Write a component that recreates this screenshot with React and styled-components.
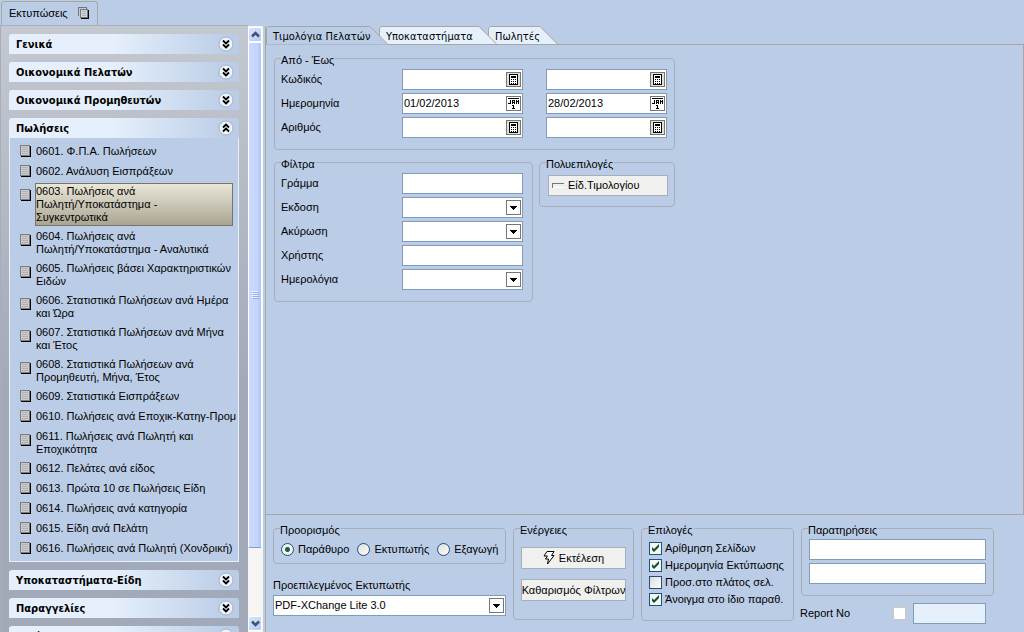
import React, { useState } from 'react';
import styled, { createGlobalStyle, ThemeProvider } from 'styled-components';

const theme = {
  blue: '#bbcde6',
  pale: '#e6f0fc',
  line: '#a7adb9',
  tabLine: '#a5a69e',
  field: '#7f9db9',
  face: '#f0f0ee',
};

const GlobalStyle = createGlobalStyle`
  * {
    box-sizing: border-box;
  }
  body {
    margin: 0;
    background: #bbcde6;
  }
  body, button, input, select {
    font: 11px/13px "Liberation Sans", Arial, sans-serif;
    color: #000;
  }
  button {
    cursor: pointer;
  }
`;

const Screen = styled.div`
  height: 100vh;
  display: flex;
  flex-direction: column;
  overflow: hidden;
  background: ${({ theme }) => theme.blue};
`;

const WindowTabs = styled.nav`
  flex: none;
  display: flex;
  height: 26px;
  padding: 1px 0 0 1px;
`;

const WindowTab = styled.button`
  display: flex;
  align-items: center;
  gap: 10px;
  padding: 0 7px;
  background: none;
  border: 1px solid ${({ theme }) => theme.tabLine};
  border-radius: 3px 3px 0 0;
`;

const Body = styled.div`
  flex: 1;
  min-height: 0;
  display: flex;
`;

const Sidebar = styled.aside`
  flex: none;
  width: 248px;
  padding: 8px 9px 0 8px;
  display: flex;
  flex-direction: column;
  gap: 8px;
  overflow: hidden;
  background: linear-gradient(#c4c8d0, #a2a9b8 60%, #a2aaba);
  border-top: 1px solid ${({ theme }) => theme.line};
  border-left: 1px solid ${({ theme }) => theme.line};
  margin-top: -1px;
`;

const Group = styled.section`
  flex: none;
`;

const GroupHeader = styled.button`
  display: flex;
  align-items: center;
  justify-content: space-between;
  width: 100%;
  height: 20px;
  padding: 0 5px 0 7px;
  border: 0;
  border-radius: 3px 3px 0 0;
  background: linear-gradient(
    90deg,
    ${({ theme }) => theme.pale} 45%,
    ${({ theme }) => theme.blue} 95%
  );
  font-family: 'DejaVu Sans Condensed', 'DejaVu Sans', sans-serif;
  font-weight: bold;
`;

const GroupList = styled.ul`
  list-style: none;
  margin: 0;
  padding: 4px 5px 2px 10px;
  background: ${({ theme }) => theme.blue};
  border: solid ${({ theme }) => theme.pale};
  border-width: 0 1px 1px;
`;

const Report = styled.button`
  display: grid;
  grid-template-columns: 12px 1fr;
  align-items: start;
  gap: 3px;
  width: 100%;
  padding: 3px 0;
  border: 0;
  background: none;
  text-align: left;

  svg {
    margin-top: ${({ $tall }) => ($tall ? 4 : 0)}px;
  }
`;

const ReportName = styled.span`
  display: block;
  min-height: 14px;
  padding: 0 0 0 1px;
  white-space: pre;
  ${({ $active }) =>
    $active &&
    `
    margin: -2px 0;
    padding: 1px 0;
    border: 1px solid #77756a;
    background: linear-gradient(#eae6d8, #aaa592);
  `}
`;

const Scrollbar = styled.div`
  flex: none;
  width: 17px;
  padding: 1px 1px 1px 0;
  display: flex;
  flex-direction: column;
  background: #f6f5f1;
  border-right: 2px solid ${({ theme }) => theme.blue};
`;

const ScrollButton = styled.button`
  flex: none;
  display: grid;
  place-items: center;
  height: 15px;
  padding: 0;
  background: linear-gradient(135deg, #dbe6fd, #b4c8f6);
  border: 1px solid #fff;
  border-radius: 2px;
`;

const Thumb = styled.div`
  flex: 505;
  display: grid;
  place-items: center;
  background: linear-gradient(90deg, #cbdafe, #c2d4fd 70%, #aec4f4);
  border: 1px solid #fff;
  border-bottom-color: #7f9fd0;
  border-radius: 2px;
`;

const Track = styled.div`
  flex: 68;
`;

const Main = styled.main`
  flex: 1;
  min-width: 0;
  display: flex;
  flex-direction: column;
  border-left: 1px solid ${({ theme }) => theme.tabLine};
`;

const TabRow = styled.div`
  flex: none;
  display: flex;
  height: 18px;
`;

const PageTab = styled.button`
  position: relative;
  flex: none;
  width: ${({ $width }) => $width}px;
  height: 19px;
  margin-right: -9px;
  padding: 2px 0 0 7px;
  border: 0;
  background: none;
  text-align: left;
  white-space: nowrap;
  font-family: 'DejaVu Sans Condensed', 'DejaVu Sans', sans-serif;
  z-index: ${({ $order }) => $order};
`;

const TabShape = styled.svg`
  position: absolute;
  inset: 0;
  width: 100%;
  height: 19px;
  z-index: -1;
  overflow: visible;
`;

const Page = styled.div`
  flex: 1;
  display: grid;
  grid-template-columns: 259px 136px;
  grid-template-rows: auto auto;
  align-content: start;
  align-items: start;
  gap: 12px 6px;
  padding: 13px 8px 0;
  border: solid ${({ theme }) => theme.tabLine};
  border-width: 1px 1px 1px 0;
`;

const Box = styled.fieldset`
  position: relative;
  min-width: 0;
  margin: 0;
  padding: ${({ $pad }) => $pad || '10px 7px'};
  border: 1px solid ${({ theme }) => theme.line};
  border-radius: 4px;
  grid-column: ${({ $wide }) => ($wide ? 'span 2' : 'auto')};
`;

const Legend = styled.legend`
  position: absolute;
  top: -5px;
  left: 6px;
  padding: 0 1px 0 0;
  background: ${({ theme }) => theme.blue};
`;

const Rows = styled.div`
  display: grid;
  grid-template-columns: ${({ $cols }) => $cols};
  align-items: center;
  row-gap: 3px;
`;

const Field = styled.div`
  display: flex;
  align-items: center;
  height: 21px;
  padding: 0 1px;
  background: ${({ $muted, theme }) => ($muted ? theme.pale : '#fff')};
  border: 1px solid ${({ theme }) => theme.field};
`;

const TextInput = styled.input`
  flex: 1;
  min-width: 0;
  width: 100%;
  padding: 0;
  border: 0;
  outline: 0;
  background: none;
`;

const FieldButton = styled.button`
  flex: none;
  display: grid;
  place-items: center;
  width: 15px;
  height: 15px;
  padding: 0;
  background: #e4e0d4;
  border: 1px solid #77756f;
`;

const SelectField = styled.select`
  width: 100%;
  height: 21px;
  padding: 0 18px 0 1px;
  appearance: none;
  border: 1px solid ${({ theme }) => theme.field};
  border-radius: 0;
  background: #fff
    url("data:image/svg+xml,%3Csvg xmlns='http://www.w3.org/2000/svg' width='15' height='15' shape-rendering='crispEdges'%3E%3Cpath fill='%23fff' stroke='%2377756f' d='M.5.5h14v14H.5z'/%3E%3Cpath d='M4 6h7v1h-1v1H9v1H8v1H7V9H6V8H5V7H4z'/%3E%3C/svg%3E")
    no-repeat right 1px center;
`;

const PushButton = styled.button`
  display: flex;
  align-items: center;
  justify-content: ${({ $start }) => ($start ? 'flex-start' : 'center')};
  gap: 4px;
  width: 100%;
  height: ${({ $start }) => ($start ? 21 : 22)}px;
  padding: 0 3px;
  background: ${({ theme }) => theme.face};
  border: 1px solid ${({ theme }) => theme.line};
  white-space: nowrap;
`;

const Footer = styled.footer`
  flex: none;
  display: flex;
  align-items: flex-start;
  gap: 7px;
  height: 117px;
  padding: 13px 7px 0;
`;

const Column = styled.div`
  flex: none;
  width: ${({ $width }) => $width}px;
`;

const Options = styled.div`
  display: flex;
  flex-direction: ${({ $vertical }) => ($vertical ? 'column' : 'row')};
  gap: ${({ $gap }) => $gap}px;
`;

const Choice = styled.label`
  display: flex;
  align-items: center;
  gap: ${({ $gap }) => $gap || 3}px;
  white-space: nowrap;
`;

const Radio = styled.input`
  appearance: none;
  width: 13px;
  height: 13px;
  margin: 0;
  border: 1px solid #1c5180;
  border-radius: 50%;
  background: linear-gradient(135deg, #dcdcd7, #fff);
  &:checked {
    background: radial-gradient(circle, #1b5c50 2px, #f4f4f1 3px);
  }
`;

const Check = styled.input`
  appearance: none;
  flex: none;
  width: 13px;
  height: 13px;
  margin: 0;
  border: 1px solid ${({ $plain }) => ($plain ? '#cdc9b5' : '#1c5180')};
  background: ${({ $plain }) =>
    $plain ? '#fff' : 'linear-gradient(135deg, #dcdcd7, #fff)'};
  &:checked {
    background: #f4f8f2
      url("data:image/svg+xml,%3Csvg xmlns='http://www.w3.org/2000/svg' width='11' height='11'%3E%3Cpath fill='%23144f3c' d='M2 4l2 2 5-5v3L4 9 2 7z'/%3E%3C/svg%3E");
  }
`;

const PrinterLabel = styled.label`
  display: block;
  margin: 15px 0 3px;
`;

const ReportNo = styled.div`
  display: grid;
  grid-template-columns: 1fr 13px 73px;
  align-items: center;
  gap: 7px;
  margin: 7px 8px 0 -1px;
`;

const SheetIcon = () => (
  <svg width="12" height="13" shapeRendering="crispEdges">
    <path d="M1 11h9V1h1v11H1z" fill="#000" />
    <path d="M.5.5h9v10h-9z" fill="#c8cbcf" stroke="#7c7c7c" />
    <path d="M2 2.500h6M2 4.500h6M2 6.500h6M2 8.500h6" stroke="#b0b2b5" />
  </svg>
);

const SheetsIcon = () => (
  <svg width="12" height="13" shapeRendering="crispEdges">
    <path d="M.5 8.500v-8h8v2" fill="none" stroke="#777" />
    <path d="M3 11h7V3h1v9H3z" fill="#000" />
    <path d="M2.500 2.500h7v8h-7z" fill="#cdd5e0" stroke="#777" />
    <path d="M4 4.500h4M4 6.500h4M4 8.500h4" stroke="#b0b2b5" />
  </svg>
);

const Chevrons = ({ up }) => (
  <svg width="16" height="16" viewBox="0 0 16 16">
    <circle cx="8" cy="8" r="7" fill="#edf4fd" stroke="#a3b1c8" />
    <path
      d="M5 4.500l3 3 3-3M5 8.500l3 3 3-3"
      transform={up ? 'rotate(180 8 8)' : undefined}
      fill="none"
      stroke="#000"
      strokeWidth="1.800"
    />
  </svg>
);

const Arrow = ({ up }) => (
  <svg width="9" height="7">
    <path
      d={up ? 'M1 5.500l3.500-3.500L8 5.500' : 'M1 1.500L4.500 5 8 1.500'}
      fill="none"
      stroke="#365676"
      strokeWidth="2.500"
    />
  </svg>
);

const CalcIcon = () => (
  <svg width="9" height="11" shapeRendering="crispEdges">
    <path d="M.5.5h8v10h-8z" fill="#fff" stroke="#000" />
    <path d="M2 2h5v2H2z" />
    <path d="M2 5.500h5M2 7.500h5M2 9h5" stroke="#000" strokeDasharray="1 1" />
  </svg>
);

const CalendarIcon = () => (
  <svg width="13" height="13" shapeRendering="crispEdges">
    <path d="M0 0h13v13H0z" fill="#fff" />
    <path d="M1 1h11v1H1z" />
    <path
      d="M3.500 3v4M1 6.500h2M5.500 7V3.500h2V7M5 5.500h3M9.500 7V3M11.500 7V3M10 4.500h1M6.500 8v4M5 8.500h1M5 11.500h3"
      fill="none"
      stroke="#000"
    />
  </svg>
);

const BoltIcon = () => (
  <svg width="12" height="14">
    <path
      d="M4 .5h7L8.500 4.500h2.500L4.500 13l1-5H2.500l2-3H1z"
      fill="#fff"
      stroke="#000"
    />
  </svg>
);

const SlotIcon = () => (
  <svg width="12" height="5" shapeRendering="crispEdges">
    <path d="M.5 5V.5H12" fill="none" stroke="#777" />
    <path d="M1 4.500h11V1" fill="none" stroke="#fff" />
  </svg>
);

const Grip = () => (
  <svg width="7" height="8" shapeRendering="crispEdges">
    <path d="M0 .5h6M0 2.500h6M0 4.500h6M0 6.500h6" stroke="#eef4fe" />
    <path d="M1 1.500h6M1 3.500h6M1 5.500h6M1 7.500h6" stroke="#8cb0f8" />
  </svg>
);

const reports = [
  '0601. Φ.Π.Α. Πωλήσεων',
  '0602. Ανάλυση Εισπράξεων',
  '0603. Πωλήσεις ανά\nΠωλητή/Υποκατάστημα -\nΣυγκεντρωτικά',
  '0604. Πωλήσεις ανά\nΠωλητή/Υποκατάστημα - Αναλυτικά',
  '0605. Πωλήσεις βάσει Χαρακτηριστικών\nΕιδών',
  '0606. Στατιστικά Πωλήσεων ανά Ημέρα\nκαι Ώρα',
  '0607. Στατιστικά Πωλήσεων ανά Μήνα\nκαι Έτος',
  '0608. Στατιστικά Πωλήσεων ανά\nΠρομηθευτή, Μήνα, Έτος',
  '0609. Στατιστικά Εισπράξεων',
  '0610. Πωλήσεις ανά Εποχικ-Κατηγ-Προμ',
  '0611. Πωλήσεις ανά Πωλητή και\nΕποχικότητα',
  '0612. Πελάτες ανά είδος',
  '0613. Πρώτα 10 σε Πωλήσεις Είδη',
  '0614. Πωλήσεις ανά κατηγορία',
  '0615. Είδη ανά Πελάτη',
  '0616. Πωλήσεις ανά Πωλητή (Χονδρική)',
];

const groups = [
  { title: 'Γενικά' },
  { title: 'Οικονομικά Πελατών' },
  { title: 'Οικονομικά Προμηθευτών' },
  { title: 'Πωλήσεις', items: reports },
  { title: 'Υποκαταστήματα-Είδη' },
  { title: 'Παραγγελίες' },
  { title: 'Κινήσεις' },
];

const ranges = [
  { id: 'code', label: 'Κωδικός', Icon: CalcIcon, values: ['', ''] },
  {
    id: 'date',
    label: 'Ημερομηνία',
    Icon: CalendarIcon,
    values: ['01/02/2013', '28/02/2013'],
  },
  { id: 'number', label: 'Αριθμός', Icon: CalcIcon, values: ['', ''] },
];

const filters = [
  { id: 'letter', label: 'Γράμμα' },
  { id: 'issue', label: 'Εκδοση', select: true },
  { id: 'cancel', label: 'Ακύρωση', select: true },
  { id: 'user', label: 'Χρήστης' },
  { id: 'journal', label: 'Ημερολόγια', select: true },
];

const tabs = [
  { label: 'Τιμολόγια Πελατών', width: 122 },
  { label: 'Υποκαταστήματα', width: 118 },
  { label: 'Πωλητές', width: 70 },
];

const options = [
  { label: 'Αρίθμηση Σελίδων', checked: true },
  { label: 'Ημερομηνία Εκτύπωσης', checked: true },
  { label: 'Προσ.στο πλάτος σελ.', checked: false },
  { label: 'Άνοιγμα στο ίδιο παραθ.', checked: true },
];

const NavGroup = ({ title, items, selected, onSelect }) => (
  <Group>
    <GroupHeader>
      {title}
      <Chevrons up={Boolean(items)} />
    </GroupHeader>
    {items && (
      <GroupList>
        {items.map((item) => (
          <li key={item}>
            <Report $tall={item.includes('\n')} onClick={() => onSelect(item)}>
              <SheetIcon />
              <ReportName $active={item === selected}>{item}</ReportName>
            </Report>
          </li>
        ))}
      </GroupList>
    )}
  </Group>
);

const PageTabs = ({ active, onChange }) => (
  <TabRow role="tablist">
    {tabs.map(({ label, width }, i) => (
      <PageTab
        key={label}
        role="tab"
        aria-selected={active === i}
        $width={width}
        $order={active === i ? 4 : 3 - i}
        onClick={() => onChange(i)}
      >
        <TabShape>
          <path
            d={`M.5 18.500V2.500l2-2H${width - 18}l18 18`}
            fill={active === i ? theme.blue : theme.pale}
          />
          <path
            d={`M.5 18.500V2.500l2-2H${width - 18}l18 18${active === i ? '' : 'H0'}`}
            fill="none"
            stroke={theme.tabLine}
          />
        </TabShape>
        {label}
      </PageTab>
    ))}
  </TabRow>
);

const App = () => {
  const [selected, setSelected] = useState(reports[2]);
  const [tab, setTab] = useState(0);

  return (
    <ThemeProvider theme={theme}>
      <GlobalStyle />
      <Screen>
        <WindowTabs>
          <WindowTab>
            Εκτυπώσεις
            <SheetsIcon />
          </WindowTab>
        </WindowTabs>
        <Body>
          <Sidebar>
            {groups.map((group) => (
              <NavGroup
                key={group.title}
                {...group}
                selected={selected}
                onSelect={setSelected}
              />
            ))}
          </Sidebar>
          <Scrollbar>
            <ScrollButton aria-label="Πάνω">
              <Arrow up />
            </ScrollButton>
            <Thumb>
              <Grip />
            </Thumb>
            <Track />
            <ScrollButton aria-label="Κάτω">
              <Arrow />
            </ScrollButton>
          </Scrollbar>
          <Main>
            <PageTabs active={tab} onChange={setTab} />
            <Page>
              <Box $wide $pad="10px 7px 11px 6px">
                <Legend>Από - Έως</Legend>
                <Rows $cols="121px 121px 23px 121px">
                  {ranges.map(({ id, label, Icon, values }) => (
                    <React.Fragment key={id}>
                      <label htmlFor={id}>{label}</label>
                      <Field>
                        <TextInput id={id} defaultValue={values[0]} />
                        <FieldButton aria-label={`${label} από`}>
                          <Icon />
                        </FieldButton>
                      </Field>
                      <span />
                      <Field>
                        <TextInput
                          aria-label={`${label} έως`}
                          defaultValue={values[1]}
                        />
                        <FieldButton aria-label={`${label} έως`}>
                          <Icon />
                        </FieldButton>
                      </Field>
                    </React.Fragment>
                  ))}
                </Rows>
              </Box>
              <Box $pad="10px 9px 11px 6px">
                <Legend>Φίλτρα</Legend>
                <Rows $cols="121px 1fr">
                  {filters.map(({ id, label, select }) => (
                    <React.Fragment key={id}>
                      <label htmlFor={id}>{label}</label>
                      {select ? (
                        <SelectField id={id} />
                      ) : (
                        <Field>
                          <TextInput id={id} />
                        </Field>
                      )}
                    </React.Fragment>
                  ))}
                </Rows>
              </Box>
              <Box $pad="12px 6px 10px 8px">
                <Legend>Πολυεπιλογές</Legend>
                <PushButton $start>
                  <SlotIcon />
                  Είδ.Τιμολογίου
                </PushButton>
              </Box>
            </Page>
            <Footer>
              <Column $width={233}>
                <Box $pad="14px 7px 7px">
                  <Legend>Προορισμός</Legend>
                  <Options $gap={8}>
                    {['Παράθυρο', 'Εκτυπωτής', 'Εξαγωγή'].map((name, i) => (
                      <Choice key={name} $gap={4}>
                        <Radio type="radio" name="target" defaultChecked={i === 0} />
                        {name}
                      </Choice>
                    ))}
                  </Options>
                </Box>
                <PrinterLabel htmlFor="printer">
                  Προεπιλεγμένος Εκτυπωτής
                </PrinterLabel>
                <SelectField id="printer">
                  <option>PDF-XChange Lite 3.0</option>
                </SelectField>
              </Column>
              <Column $width={121}>
                <Box $pad="18px 7px">
                  <Legend>Ενέργειες</Legend>
                  <Options $vertical $gap={10}>
                    <PushButton>
                      <BoltIcon />
                      Εκτέλεση
                    </PushButton>
                    <PushButton>Καθαρισμός Φίλτρων</PushButton>
                  </Options>
                </Box>
              </Column>
              <Column $width={153}>
                <Box $pad="13px 7px 14px">
                  <Legend>Επιλογές</Legend>
                  <Options $vertical $gap={4}>
                    {options.map(({ label, checked }) => (
                      <Choice key={label}>
                        <Check type="checkbox" defaultChecked={checked} />
                        {label}
                      </Choice>
                    ))}
                  </Options>
                </Box>
              </Column>
              <Column $width={193}>
                <Box $pad="10px 7px 11px">
                  <Legend>Παρατηρήσεις</Legend>
                  <Options $vertical $gap={3}>
                    <Field>
                      <TextInput aria-label="Παρατηρήσεις 1" />
                    </Field>
                    <Field>
                      <TextInput aria-label="Παρατηρήσεις 2" />
                    </Field>
                  </Options>
                </Box>
                <ReportNo>
                  <label htmlFor="reportNo">Report No</label>
                  <Check $plain type="checkbox" aria-label="Report No" />
                  <Field $muted>
                    <TextInput id="reportNo" />
                  </Field>
                </ReportNo>
              </Column>
            </Footer>
          </Main>
        </Body>
      </Screen>
    </ThemeProvider>
  );
};

export default App;
